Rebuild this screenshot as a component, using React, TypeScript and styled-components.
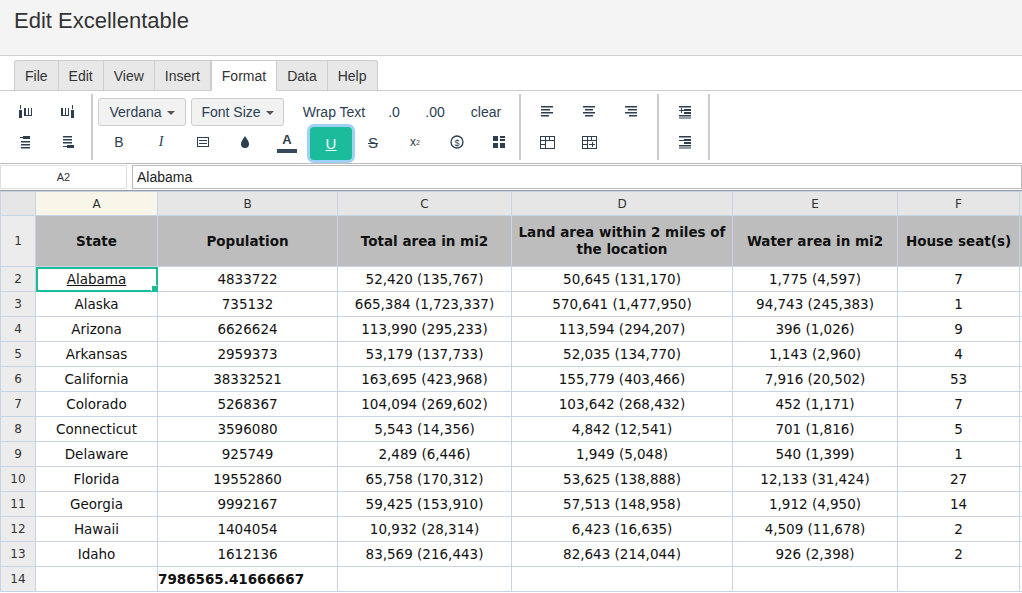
import React from 'react';
import styled, { createGlobalStyle } from 'styled-components';

const Global = createGlobalStyle`
  body { margin: 0; font-family: "Liberation Sans", Arial, sans-serif; background: #fff; overflow: hidden; }
`;

const INK = '#2c3e50';

const TitleBar = styled.div`
  height: 56px;
  box-sizing: border-box;
  background: #f4f4f4;
  border-bottom: 1px solid #d0d0d0;
  padding: 8px 0 0 14px;
  font-size: 22px;
  color: #333;
`;

const Tabs = styled.div`
  display: flex;
  padding: 4px 0 0 14px;
  border-bottom: 1px solid #ccc;
`;

const Tab = styled.div<{ active?: boolean }>`
  height: 29px;
  padding: 0 10px;
  display: flex;
  align-items: center;
  font-size: 14px;
  color: #333;
  background: ${({ active }) => (active ? '#fff' : '#e8e8e8')};
  border: 1px solid #ccc;
  border-left: ${({ active }) => (active ? '1px solid #ccc' : 'none')};
  border-bottom: ${({ active }) => (active ? '1px solid #fff' : 'none')};
  margin-bottom: -1px;
  &:first-child { border-left: 1px solid #ccc; border-radius: 3px 0 0 0; }
  &:last-child { border-radius: 0 3px 0 0; }
`;

const Toolbar = styled.div`
  display: flex;
  align-items: stretch;
  padding: 3px 0;
  border-bottom: 1px solid #bbb;
  box-sizing: border-box;
  height: 73px;
`;

const Group = styled.div<{ w: number }>`
  width: ${({ w }) => w}px;
  border-right: 2px solid #ccc;
  display: grid;
  grid-auto-rows: 30px;
  align-content: center;
  padding-left: 5px;
  box-sizing: border-box;
`;

const Row = styled.div`
  display: flex;
  align-items: center;
`;

const IconBtn = styled.div<{ w?: number }>`
  width: ${({ w }) => w ?? 42}px;
  height: 30px;
  display: flex;
  align-items: center;
  justify-content: center;
  font-size: 14px;
  color: ${INK};
`;

const Drop = styled.div<{ w: number }>`
  width: ${({ w }) => w}px;
  height: 28px;
  margin-right: 5px;
  border: 1px solid #ccc;
  border-radius: 3px;
  background: #f2f2f2;
  box-sizing: border-box;
  display: flex;
  align-items: center;
  justify-content: center;
  gap: 5px;
  font-size: 14px;
  color: ${INK};
  &::after { content: ''; border: 4px solid transparent; border-top-color: #555; border-bottom: 0; margin-top: 2px; }
`;

const TextBtn = styled.div<{ w: number }>`
  width: ${({ w }) => w}px;
  text-align: center;
  font-size: 14px;
  color: ${INK};
`;

const Active = styled.div`
  width: 42px;
  height: 33px;
  margin: 0 0 -3px 2px;
  border-radius: 4px;
  background: #1abc9c;
  box-shadow: 0 0 0 3px #9fd0f5;
  color: #fff;
  display: flex;
  align-items: center;
  justify-content: center;
  font-size: 15px;
  text-decoration: underline;
`;

const FormulaBar = styled.div`
  height: 24px;
  display: flex;
  gap: 5px;
  padding: 1px 0;
  border-bottom: 1px solid #999;
`;

const NameBox = styled.div`
  width: 127px;
  border: 1px solid #ddd;
  font-size: 11px;
  color: #333;
  display: flex;
  align-items: center;
  justify-content: center;
  box-sizing: border-box;
`;

const Input = styled.div`
  flex: 1;
  border: 1px solid #bbb;
  font-size: 14px;
  padding-left: 4px;
  display: flex;
  align-items: center;
  color: #222;
`;

const Grid = styled.table`
  border-collapse: collapse;
  table-layout: fixed;
  font-family: "DejaVu Sans", Verdana, sans-serif;
  font-size: 13.5px;
  color: #111;
  td, th { border: 1px solid #c8d4e4; padding: 0; text-align: center; overflow: hidden; white-space: nowrap; }
`;

const ColHead = styled.th<{ sel?: boolean }>`
  height: 23px;
  font-weight: normal;
  font-size: 12px;
  color: #333;
  background: ${({ sel }) => (sel ? '#f8f6e9' : '#e6e6e6')};
`;

const RowHead = styled.td`
  background: #ececec;
  font-size: 12px;
  color: #333;
`;

const HeadCell = styled.td`
  background: #bdbdbd;
  font-weight: bold;
  height: 50px;
  white-space: normal !important;
  line-height: 17px;
  padding: 0 4px !important;
`;

const Cell = styled.td<{ sel?: boolean }>`
  height: 24px;
  position: relative;
  ${({ sel }) => sel && 'outline: 2px solid #1abc9c; outline-offset: -2px; text-decoration: underline;'}
`;

const Handle = styled.span`
  position: absolute;
  right: -1px;
  bottom: -1px;
  width: 5px;
  height: 5px;
  background: #1abc9c;
  border: 1px solid #fff;
`;

const Svg = ({ children, w = 16, h = 16 }: { children: React.ReactNode; w?: number; h?: number }) => (
  <svg width={w} height={h} viewBox={`0 0 ${w} ${h}`} fill={INK} stroke="none">{children}</svg>
);

const Lines = ({ xs }: { xs: [number, number][] }) => (
  <Svg>{xs.map(([x, w], i) => <rect key={i} x={x} y={2 + i * 3} width={w} height={1.5} />)}</Svg>
);

const data: (string | number)[][] = [
  ['Alabama', '4833722', '52,420 (135,767)', '50,645 (131,170)', '1,775 (4,597)', 7],
  ['Alaska', '735132', '665,384 (1,723,337)', '570,641 (1,477,950)', '94,743 (245,383)', 1],
  ['Arizona', '6626624', '113,990 (295,233)', '113,594 (294,207)', '396 (1,026)', 9],
  ['Arkansas', '2959373', '53,179 (137,733)', '52,035 (134,770)', '1,143 (2,960)', 4],
  ['California', '38332521', '163,695 (423,968)', '155,779 (403,466)', '7,916 (20,502)', 53],
  ['Colorado', '5268367', '104,094 (269,602)', '103,642 (268,432)', '452 (1,171)', 7],
  ['Connecticut', '3596080', '5,543 (14,356)', '4,842 (12,541)', '701 (1,816)', 5],
  ['Delaware', '925749', '2,489 (6,446)', '1,949 (5,048)', '540 (1,399)', 1],
  ['Florida', '19552860', '65,758 (170,312)', '53,625 (138,888)', '12,133 (31,424)', 27],
  ['Georgia', '9992167', '59,425 (153,910)', '57,513 (148,958)', '1,912 (4,950)', 14],
  ['Hawaii', '1404054', '10,932 (28,314)', '6,423 (16,635)', '4,509 (11,678)', 2],
  ['Idaho', '1612136', '83,569 (216,443)', '82,643 (214,044)', '926 (2,398)', 2],
];

const widths = [35, 122, 180, 174, 221, 165, 122, 30];

export default function App() {
  return (
    <>
      <Global />
      <TitleBar>Edit Excellentable</TitleBar>
      <Tabs>
        {['File', 'Edit', 'View', 'Insert', 'Format', 'Data', 'Help'].map(t => (
          <Tab key={t} active={t === 'Format'}>{t}</Tab>
        ))}
      </Tabs>
      <Toolbar>
        <Group w={93}>
          <Row>
            <IconBtn><Svg><rect x="1" y="6" width="3" height="8" /><rect x="2" y="1" width="1" height="4" /><path d="M6 4v8h8V4h-1v7h-2V4h-1v7H8V4z" /></Svg></IconBtn>
            <IconBtn><Svg><path d="M1 4v8h8V4H8v7H6V4H5v7H3V4z" /><rect x="11" y="6" width="3" height="8" /><rect x="12" y="1" width="1" height="4" /></Svg></IconBtn>
          </Row>
          <Row>
            <IconBtn><Svg><rect x="5" y="2" width="7" height="3" /><rect x="2" y="3" width="3" height="1" /><rect x="3" y="7" width="9" height="1.5" /><rect x="3" y="10" width="9" height="1.5" /><rect x="3" y="13" width="9" height="1.5" /></Svg></IconBtn>
            <IconBtn><Svg><rect x="3" y="2" width="9" height="1.5" /><rect x="3" y="5" width="9" height="1.5" /><rect x="3" y="8" width="9" height="1.5" /><rect x="7" y="11" width="7" height="3" /><rect x="3" y="12" width="4" height="1" /></Svg></IconBtn>
          </Row>
        </Group>
        <Group w={428}>
          <Row>
            <Drop w={88}>Verdana</Drop>
            <Drop w={93}>Font Size</Drop>
            <TextBtn w={90}>Wrap Text</TextBtn>
            <TextBtn w={30}>.0</TextBtn>
            <TextBtn w={52}>.00</TextBtn>
            <TextBtn w={50}>clear</TextBtn>
          </Row>
          <Row>
            <IconBtn>B</IconBtn>
            <IconBtn style={{ fontStyle: 'italic', fontFamily: 'Liberation Serif' }}>I</IconBtn>
            <IconBtn><Svg><path d="M2 3h12v10H2zM3 4v8h10V4z" /><rect x="4" y="6" width="8" height="1" /><rect x="4" y="9" width="8" height="1" /></Svg></IconBtn>
            <IconBtn><Svg><path d="M8 2C6 5 4 7.5 4 10a4 4 0 0 0 8 0c0-2.5-2-5-4-8z" /></Svg></IconBtn>
            <IconBtn style={{ flexDirection: 'column', fontSize: 13, fontWeight: 'bold' }}>A<div style={{ width: 20, height: 4, background: '#34495e', marginTop: 2 }} /></IconBtn>
            <Active>U</Active>
            <IconBtn style={{ textDecoration: 'line-through', fontSize: 15 }}>S</IconBtn>
            <IconBtn style={{ fontSize: 12 }}>x<sup style={{ fontSize: 7 }}>2</sup></IconBtn>
            <IconBtn><Svg><circle cx="8" cy="8" r="6" fill="none" stroke={INK} strokeWidth="1.3" /><text x="8" y="11.5" fontSize="9" textAnchor="middle" fontFamily="Liberation Sans">$</text></Svg></IconBtn>
            <IconBtn><Svg><rect x="2" y="2" width="5" height="5" /><rect x="9" y="2" width="5" height="2" /><rect x="9" y="5" width="5" height="2" /><rect x="2" y="9" width="5" height="5" /><rect x="9" y="9" width="5" height="5" /></Svg></IconBtn>
          </Row>
        </Group>
        <Group w={138}>
          <Row>
            <IconBtn><Lines xs={[[2, 12], [2, 9], [2, 12], [2, 8]]} /></IconBtn>
            <IconBtn><Lines xs={[[2, 12], [4, 8], [2, 12], [4, 8]]} /></IconBtn>
            <IconBtn><Lines xs={[[2, 12], [5, 9], [2, 12], [6, 8]]} /></IconBtn>
          </Row>
          <Row>
            <IconBtn><Svg><path d="M1 2h15v13H1zM2 3v3h4V3zm5 0v3h3V3zm4 0v3h4V3zM2 7v3h4V7zm5 0v7h8V7zM2 11v3h4v-3z" /></Svg></IconBtn>
            <IconBtn><Svg><path d="M1 2h15v13H1zM2 3v3h4V3zm5 0v3h3V3zm4 0v3h4V3zM2 7v3h4V7zm0 4v3h4v-3zm5-4v7h8V7z" /><rect x="8" y="10" width="6" height="1" /><rect x="11" y="8" width="1" height="5" /></Svg></IconBtn>
          </Row>
        </Group>
        <Group w={51}>
          <Row><IconBtn><Svg><rect x="2" y="2" width="12" height="1.5" /><rect x="7" y="5" width="7" height="2" /><rect x="7" y="8" width="7" height="2" /><rect x="2" y="11" width="12" height="1.5" /><rect x="2" y="13.5" width="12" height="1" /><path d="M2 6h2V4h1v2h2v1H5v2H4V7H2z" /></Svg></IconBtn></Row>
          <Row><IconBtn><Svg><rect x="2" y="2" width="12" height="1.5" /><rect x="7" y="5" width="7" height="2" /><rect x="7" y="8" width="7" height="2" /><rect x="2" y="11" width="12" height="1.5" /><rect x="2" y="13.5" width="12" height="1" /><path d="M2 6h5v1H2z" /></Svg></IconBtn></Row>
        </Group>
      </Toolbar>
      <FormulaBar>
        <NameBox>A2</NameBox>
        <Input>Alabama</Input>
      </FormulaBar>
      <Grid style={{ width: widths.reduce((a, b) => a + b, 0) }}>
        <colgroup>{widths.map((w, i) => <col key={i} style={{ width: w }} />)}</colgroup>
        <thead>
          <tr>
            <ColHead />
            {['A', 'B', 'C', 'D', 'E', 'F', ''].map((c, i) => <ColHead key={i} sel={c === 'A'}>{c}</ColHead>)}
          </tr>
        </thead>
        <tbody>
          <tr>
            <RowHead>1</RowHead>
            {['State', 'Population', 'Total area in mi2', 'Land area within 2 miles of the location', 'Water area in mi2', 'House seat(s)'].map(h => <HeadCell key={h}>{h}</HeadCell>)}
            <HeadCell />
          </tr>
          {data.map((r, i) => (
            <tr key={i}>
              <RowHead>{i + 2}</RowHead>
              {r.map((v, j) => (
                <Cell key={j} sel={i === 0 && j === 0}>{v}{i === 0 && j === 0 && <Handle />}</Cell>
              ))}
              <Cell />
            </tr>
          ))}
          <tr>
            <RowHead>14</RowHead>
            <Cell />
            <Cell style={{ fontWeight: 'bold', textAlign: 'left', overflow: 'visible' }}>7986565.41666667</Cell>
            <Cell /><Cell /><Cell /><Cell /><Cell />
          </tr>
        </tbody>
      </Grid>
    </>
  );
}
